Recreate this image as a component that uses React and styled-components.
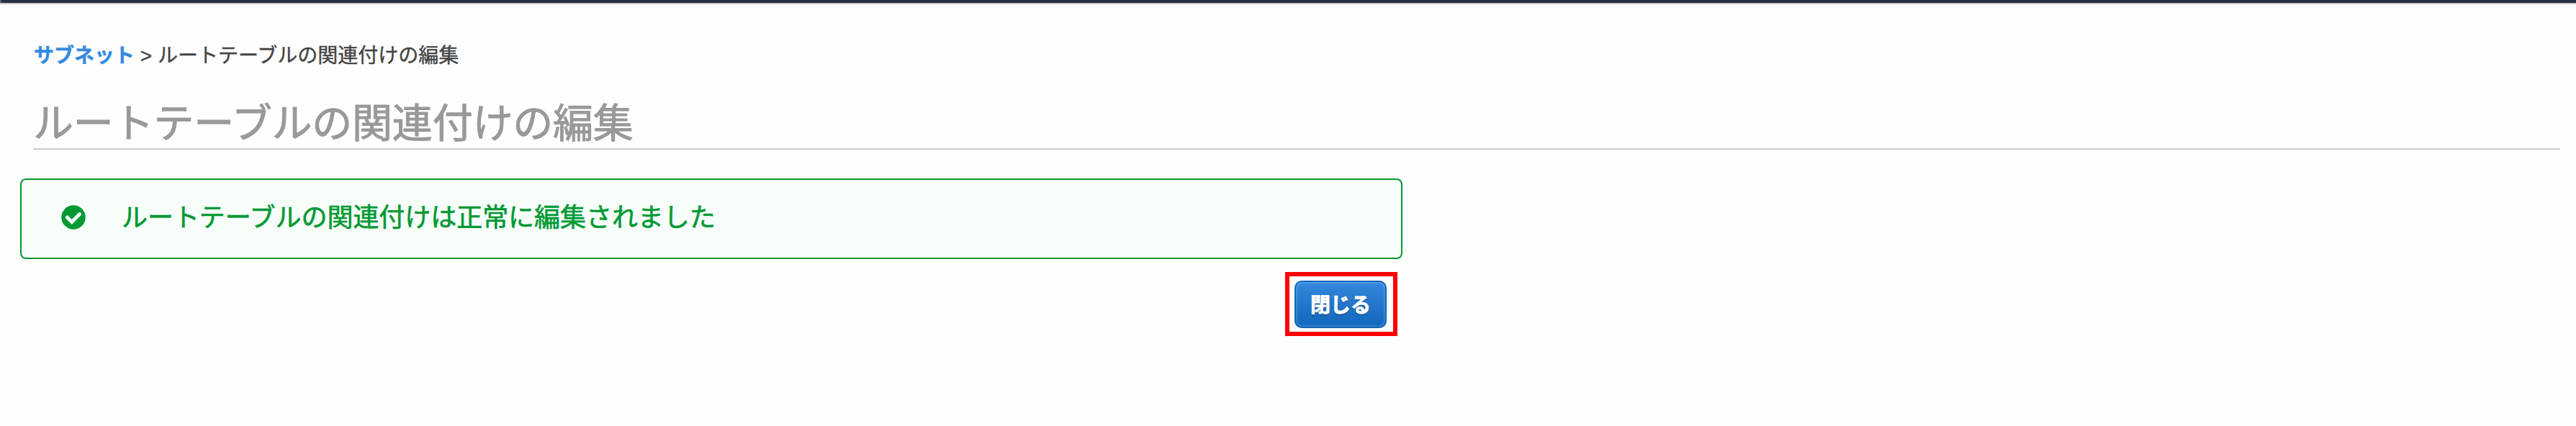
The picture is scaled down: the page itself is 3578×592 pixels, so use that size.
import React from "react";
import styled, { createGlobalStyle } from "styled-components";

const GlobalStyle = createGlobalStyle`
  * { box-sizing: border-box; }
  body {
    margin: 0;
    background: #fefefe;
    font-family: "Liberation Sans", "Noto Sans CJK JP", sans-serif;
    color: #444;
  }
`;

const Page = styled.div`
  height: 592px;
  overflow: hidden;
`;

const TopBar = styled.header`
  height: 6px;
  background: linear-gradient(to right, #58616f 2px, #232f44 2px);
  border-bottom: 2px solid #c9c9c9;
`;

const Header = styled.div`
  margin: 0 22px 0 46px;
  height: 202px;
  padding-top: 52px;
  border-bottom: 2px solid #ccc;
`;

const Breadcrumb = styled.nav`
  display: flex;
  height: 40px;
  padding-left: 1px;
  line-height: 40px;
  font-size: 28px;
  white-space: pre;
  -webkit-text-stroke: 0.4px currentColor;
`;

const Crumb = styled.a`
  color: #338ae0;
  font-weight: 700;
  text-decoration: none;
`;

const Title = styled.h1`
  margin: 39px 0 0;
  height: 70px;
  line-height: 70px;
  font-size: 56px;
  font-weight: 400;
  letter-spacing: -0.2px;
  color: #999;
  -webkit-text-stroke: 1px currentColor;
`;

const Content = styled.main`
  width: 1920px;
  margin: 40px 0 0 28px;
`;

const Alert = styled.div`
  display: flex;
  align-items: center;
  height: 112px;
  padding: 0 55px 4px;
  gap: 50px;
  border: 2px solid #093;
  border-radius: 8px;
  background: #f7fdf9;
  color: #093;
  font-size: 36px;
`;

const Message = styled.span`
  line-height: 50px;
  margin-top: 1px;
  letter-spacing: -0.05px;
  -webkit-text-stroke: 0.6px currentColor;
`;

const Actions = styled.div`
  display: flex;
  justify-content: flex-end;
  padding: 18px 7px 0 0;
`;

const Highlight = styled.div`
  width: 156px;
  height: 89px;
  padding: 6px 9px 5px 7px;
  border: 6px solid #f00;
`;

const Button = styled.button`
  display: block;
  width: 128px;
  height: 66px;
  padding: 0 0 2px;
  border: 2px solid #1166bb;
  border-radius: 10px;
  background: linear-gradient(#3388dd, #1166bb);
  box-shadow: inset 0 0 4px rgba(255, 255, 255, 0.4);
  color: #fff;
  font: 700 28px/60px "Noto Sans CJK JP", sans-serif;
  text-shadow: 0 2px 2px rgba(0, 0, 0, 0.3);
  -webkit-text-stroke: 0.8px currentColor;
`;

const SuccessIcon = () => (
  <svg width="34" height="34" viewBox="0 0 34 34" aria-hidden="true">
    <circle cx="17" cy="17" r="16.7" fill="#093" />
    <path
      d="M8.4 17 L14.8 23.4 L25.6 12.6"
      fill="none"
      stroke="#f7fdf9"
      strokeWidth="5"
      strokeLinecap="round"
      strokeLinejoin="miter"
    />
  </svg>
);

export default function App() {
  return (
    <Page>
      <GlobalStyle />
      <TopBar />
      <Header>
        <Breadcrumb>
          <Crumb>サブネット</Crumb>
          <span> &gt; ルートテーブルの関連付けの編集</span>
        </Breadcrumb>
        <Title>ルートテーブルの関連付けの編集</Title>
      </Header>
      <Content>
        <Alert>
          <SuccessIcon />
          <Message>ルートテーブルの関連付けは正常に編集されました</Message>
        </Alert>
        <Actions>
          <Highlight>
            <Button>閉じる</Button>
          </Highlight>
        </Actions>
      </Content>
    </Page>
  );
}
